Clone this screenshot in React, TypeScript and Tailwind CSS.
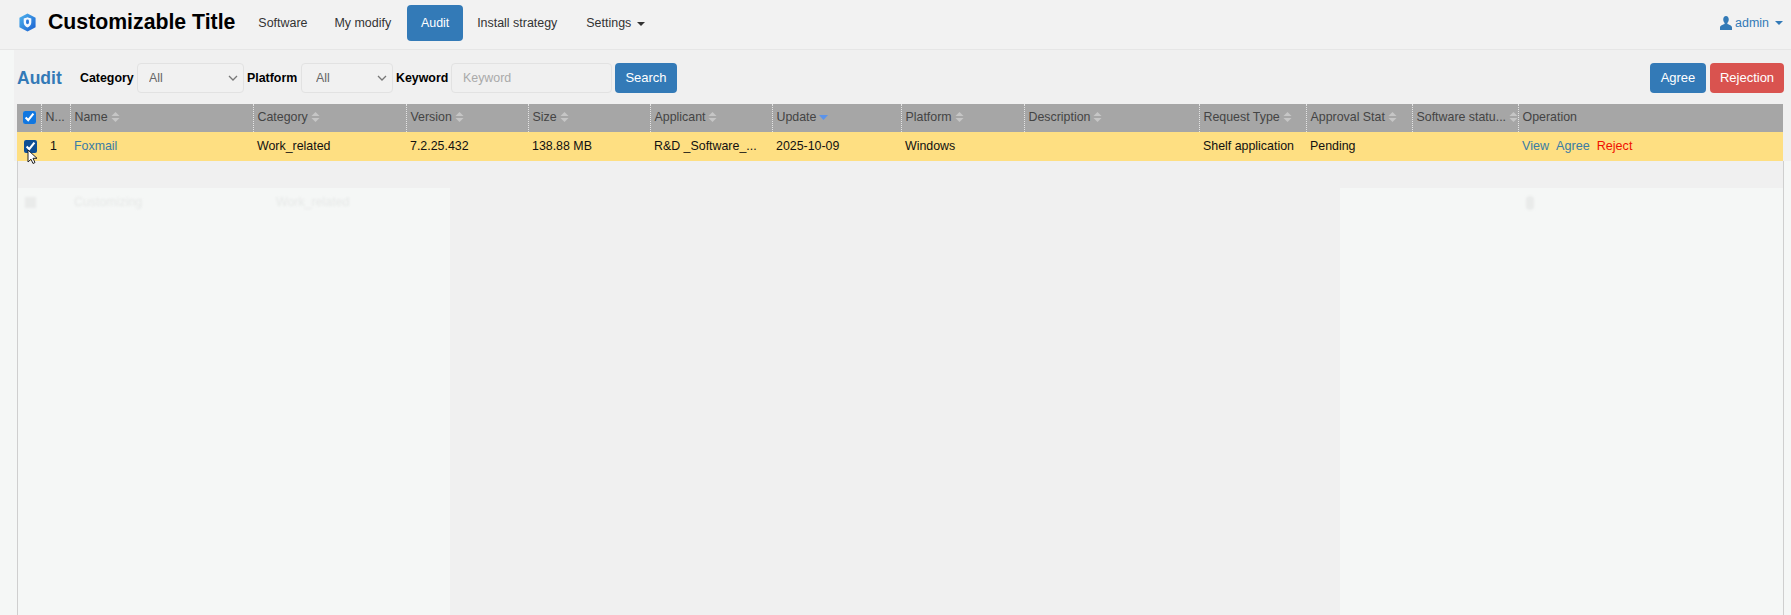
import React from 'react';

const columns = [
  { label: '', width: 24 },
  { label: 'N...', width: 29, noSort: true },
  { label: 'Name', width: 183 },
  { label: 'Category', width: 153 },
  { label: 'Version', width: 122 },
  { label: 'Size', width: 122 },
  { label: 'Applicant', width: 122 },
  { label: 'Update', width: 129, active: true },
  { label: 'Platform', width: 123 },
  { label: 'Description', width: 175 },
  { label: 'Request Type', width: 107 },
  { label: 'Approval Stat', width: 106 },
  { label: 'Software statu...', width: 106 },
  { label: 'Operation', width: 265, noSort: true },
];

function SortIcon({ active }: { active?: boolean }) {
  if (active) {
    return (
      <svg width="9" height="12" viewBox="0 0 9 12" className="shrink-0">
        <path d="M0 4h9L4.500 9z" fill="#5b93ea" />
      </svg>
    );
  }
  return (
    <svg width="9" height="12" viewBox="0 0 9 12" className="shrink-0">
      <path d="M4.500 1 8.500 5h-8z" fill="#c6c6c6" />
      <path d="M.5 7h8l-4 4z" fill="#c6c6c6" />
    </svg>
  );
}

function Logo() {
  return (
    <svg width="19" height="19" viewBox="0 0 20 20" className="shrink-0 -mt-[2px]">
      <defs>
        <linearGradient id="logo-grad" x1="0" y1="0" x2="1" y2="1">
          <stop offset="0" stopColor="#4fb4ee" />
          <stop offset="1" stopColor="#1a5fd0" />
        </linearGradient>
      </defs>
      <path d="M10 .5 18.500 5v10L10 19.500 1.500 15V5z" fill="url(#logo-grad)" strokeLinejoin="round" />
      <path d="M10 4.500c1.800.9 3 1.100 4 1.200v4.300c0 2.700-1.800 4.300-4 5.200-2.200-.9-4-2.500-4-5.200V5.700c1-.1 2.200-.3 4-1.200z" fill="#f3f8ff" />
      <rect x="8.500" y="6.800" width="3" height="5" rx="1.500" fill="#2b78dc" />
    </svg>
  );
}

function Caret() {
  return <span className="inline-block ml-[6px] align-middle border-x-[4px] border-t-[4px] border-x-transparent border-t-current" />;
}

function FilterSelect({ className, selectClass }: { className: string; selectClass: string }) {
  return (
    <div className={`relative h-[30px] ${className}`}>
      <select className={`w-full h-full appearance-none border border-[#e2e2e2] rounded-[4px] bg-[#f1f1f1] font-normal text-[#666] ${selectClass}`}>
        <option>All</option>
      </select>
      <svg width="10" height="6" viewBox="0 0 10 6" className="absolute right-[6px] top-[12px] pointer-events-none">
        <path d="M1 1l4 4 4-4" fill="none" stroke="#777" strokeWidth="1.300" />
      </svg>
    </div>
  );
}

export default function App() {
  return (
    <div className="relative h-screen w-full overflow-hidden flex flex-col bg-[#f5f7f6] text-[12.4px] text-[#111] font-['Liberation_Sans',Arial,sans-serif]">
      {/* Navbar */}
      <header className="h-[50px] shrink-0 flex items-center justify-between pl-[18px] pr-[8px] pb-[3px] bg-[#f2f2f2] border-b border-[#e6e6e6]">
        <div className="flex items-center">
          <Logo />
          <h1 className="ml-[11px] mr-[8px] text-[21.25px] font-bold text-black whitespace-nowrap">Customizable Title</h1>
          <nav className="flex items-center text-[12.45px] text-[#333]">
            <a className="pl-[15px] pr-[13px] leading-[36px]">Software</a>
            <a className="pl-[14px] pr-[16px] leading-[36px]">My modify</a>
            <a className="w-[56px] text-center leading-[36px] rounded-[4px] bg-[#337ab7] text-white">Audit</a>
            <a className="pl-[14px] pr-[15px] leading-[36px]">Install strategy</a>
            <a className="pl-[14px] leading-[36px]">Settings<Caret /></a>
          </nav>
        </div>
        <div className="flex items-center gap-[3px] text-[12.45px] text-[#337ab7]">
          <svg width="12" height="14" viewBox="0 0 13 14" preserveAspectRatio="none" fill="currentColor">
            <path d="M6.500 0C8.300 0 9.500 1.500 9.500 3.500c0 1.500-.7 2.800-1.500 3.500v1c2 .8 5 1.500 5 3.500V14H0v-2.500c0-2 3-2.700 5-3.500V7C4.200 6.300 3.500 5 3.500 3.500 3.500 1.500 4.700 0 6.500 0z" />
          </svg>
          <span>admin<Caret /></span>
        </div>
      </header>

      {/* Toolbar and table */}
      <main className="ml-[14px] pl-[3px] pr-[7px] bg-[#f0f0f0] shrink-0">
        <div className="h-[54px] pt-[13px] flex items-start justify-between">
          <div className="flex items-center h-[30px] font-bold">
            <h2 className="w-[63px] text-[17.5px] text-[#337ab7]">Audit</h2>
            <span className="w-[57px] text-black">Category</span>
            <FilterSelect className="w-[107px] mr-[3px]" selectClass="pl-[11px]" />
            <span className="w-[54px] text-black">Platform</span>
            <FilterSelect className="w-[92px] mr-[3px]" selectClass="pl-[14px]" />
            <span className="w-[55px] text-black">Keyword</span>
            <input
              placeholder="Keyword"
              className="w-[161px] h-[30px] px-[11px] border border-[#e2e2e2] rounded-[4px] font-normal placeholder:text-[#aaa]"
            />
            <button className="ml-[3px] w-[62px] h-[30px] rounded-[4px] bg-[#337ab7] text-[13px] text-white font-normal">Search</button>
          </div>
          <div className="flex gap-[4px]">
            <button className="w-[56px] h-[30px] rounded-[4px] bg-[#337ab7] text-[13px] text-white">Agree</button>
            <button className="w-[74px] h-[30px] rounded-[4px] bg-[#d9534f] text-[13px] text-white">Rejection</button>
          </div>
        </div>

        <table className="w-[1766px] table-fixed border-collapse">
          <colgroup>
            {columns.map((c, i) => (
              <col key={i} style={{ width: c.width }} />
            ))}
          </colgroup>
          <thead>
            <tr className="h-[28px] bg-[#a6a6a6] text-[#444]">
              <th className="pl-[2px] pb-[2px] text-center">
                <input type="checkbox" checked readOnly className="align-middle accent-[#1177e0]" />
              </th>
              {columns.slice(1).map((c) => (
                <th key={c.label} className="px-[4px] pb-[1px] font-normal text-left border-l border-dotted border-[#e4e4e4]">
                  <div className="flex items-center gap-[3px] whitespace-nowrap">
                    <span>{c.label}</span>
                    {!c.noSort && <SortIcon active={c.active} />}
                  </div>
                </th>
              ))}
            </tr>
          </thead>
          <tbody className="[&_td]:pb-[1px]">
            <tr className="h-[29px] bg-[#fedf82]">
              <td className="pl-[2px] text-center">
                <input type="checkbox" checked readOnly className="align-middle accent-[#0f4f94]" />
              </td>
              <td className="pr-[4px] text-center">1</td>
              <td className="px-[4px] text-[#3a7ca5]">Foxmail</td>
              <td className="px-[4px]">Work_related</td>
              <td className="px-[4px]">7.2.25.432</td>
              <td className="px-[4px]">138.88 MB</td>
              <td className="px-[4px] whitespace-nowrap">R&amp;D _Software_...</td>
              <td className="px-[4px]">2025-10-09</td>
              <td className="px-[4px]">Windows</td>
              <td className="px-[4px]" />
              <td className="px-[4px] whitespace-nowrap">Shelf application</td>
              <td className="px-[4px]">Pending</td>
              <td className="px-[4px]" />
              <td className="px-[4px]">
                <div className="flex gap-[7px] text-[12.6px]">
                  <a className="text-[#3a7ca5]">View</a>
                  <a className="text-[#3a7ca5]">Agree</a>
                  <a className="text-[#f01000]">Reject</a>
                </div>
              </td>
            </tr>
          </tbody>
        </table>
      </main>

      {/* Empty table body with the faint leftover row */}
      <section className="flex-1 min-h-0 ml-[17px] mr-[7px] flex flex-col border-x border-[#cfcfcf]">
        <div className="h-[27px] shrink-0 bg-[#f0f0f0]" />
        <div className="flex-1 grid grid-cols-[432px_890px_1fr]">
          <div className="bg-[#f5f7f6]">
            <div className="h-[28px] flex items-center text-[#e6e8e7] blur-[1px]">
              <span className="ml-[7px] w-[11px] h-[11px] bg-[#e9ebea]" />
              <span className="ml-[38px] w-[202px]">Customizing</span>
              <span>Work_related</span>
            </div>
          </div>
          <div className="bg-[#f0f0f0]" />
          <div className="bg-[#f5f7f6] pl-[186px] pt-[8px]">
            <span className="block w-[8px] h-[14px] rounded-full bg-[#e9ebea] blur-[1px]" />
          </div>
        </div>
      </section>

      {/* Mouse pointer */}
      <svg width="11" height="16" viewBox="0 0 11 16" className="absolute left-[27px] top-[149px]">
        <path d="M1 1v12l3-2.800 2 4.300 2-1-2-4.200h4z" fill="#fff" stroke="#222" strokeWidth="1" strokeLinejoin="round" />
      </svg>
    </div>
  );
}
